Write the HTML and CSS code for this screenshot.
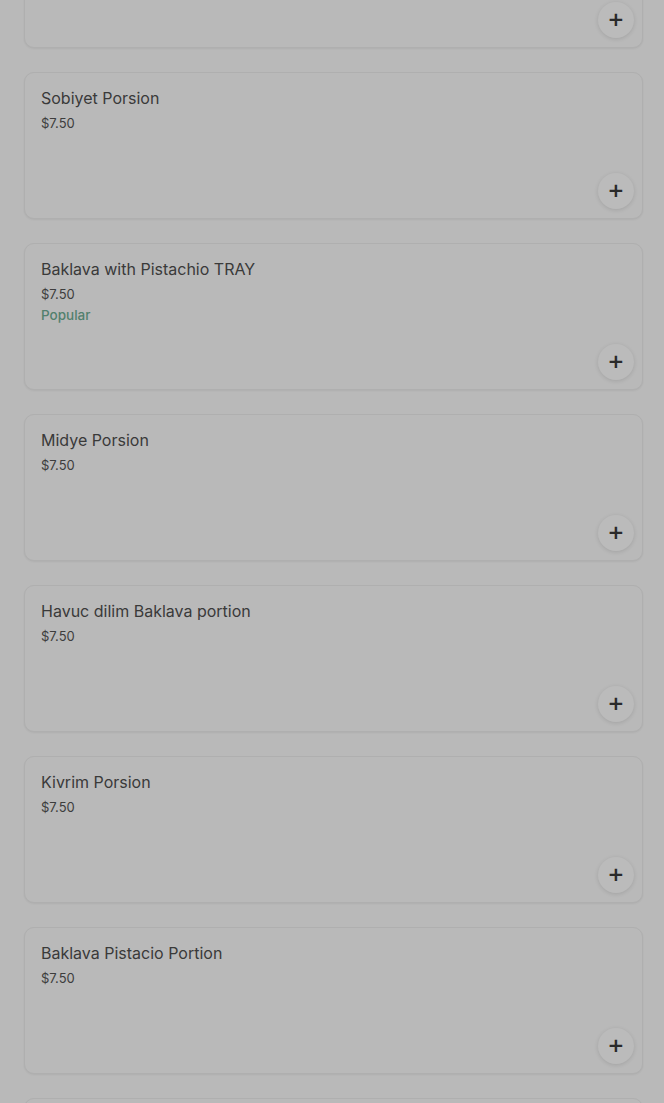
FILE: index.html
```html
<!DOCTYPE html>
<html>
<head>
<meta charset="utf-8">
<link rel="stylesheet" href="styles.css">
</head>
<body>
<div class="list">
  <div class="card"><div class="info"></div><button class="add">+</button></div>
  <div class="card"><div class="info"><div class="name">Sobiyet Porsion</div><div class="price">$7.50</div></div><button class="add">+</button></div>
  <div class="card"><div class="info"><div class="name">Baklava with Pistachio TRAY</div><div class="price">$7.50</div><div class="popular">Popular</div></div><button class="add">+</button></div>
  <div class="card"><div class="info"><div class="name">Midye Porsion</div><div class="price">$7.50</div></div><button class="add">+</button></div>
  <div class="card"><div class="info"><div class="name">Havuc dilim Baklava portion</div><div class="price">$7.50</div></div><button class="add">+</button></div>
  <div class="card"><div class="info"><div class="name">Kivrim Porsion</div><div class="price">$7.50</div></div><button class="add">+</button></div>
  <div class="card"><div class="info"><div class="name">Baklava Pistacio Portion</div><div class="price">$7.50</div></div><button class="add">+</button></div>
  <div class="card"><div class="info"></div></div>
</div>
</body>
</html>
```
FILE: styles.css
```css
html, body {
  margin: 0;
  padding: 0;
  background: #b9b9b9;
  height: 1103px;
  overflow: hidden;
  font-family: Inter, "Noto Sans", sans-serif;
}
.list {
  margin-top: -99px;
  padding-left: 24px;
  display: flex;
  flex-direction: column;
  gap: 24px;
}
.card {
  box-sizing: border-box;
  width: 619px;
  height: 147px;
  flex-shrink: 0;
  border: 1px solid #afafaf;
  border-radius: 10px;
  box-shadow: 0 1px 2px rgba(0,0,0,0.06);
  background: #b9b9b9;
  padding: 15px 8px 9px 16px;
  display: flex;
  justify-content: space-between;
  align-items: flex-end;
}
.info {
  align-self: flex-start;
  display: flex;
  flex-direction: column;
}
.name {
  font-size: 16px;
  color: #3a3a3a;
  line-height: 20px;
  margin-bottom: 5px;
}
.price {
  font-size: 13px;
  color: #3d3d3d;
  line-height: 20px;
}
.popular {
  font-size: 13.5px;
  color: #52806d;
  font-weight: 500;
  line-height: 22px;
}
.add {
  width: 36px;
  height: 36px;
  border-radius: 50%;
  border: none;
  background: #bbbbbb;
  box-shadow: 0 1px 4px rgba(0,0,0,0.12);
  color: #2a2a2a;
  font-family: "DejaVu Sans", sans-serif;
  font-size: 20px;
  font-weight: 700;
  line-height: 1;
  padding: 0 0 2px 0;
  display: flex;
  align-items: center;
  justify-content: center;
}
```
